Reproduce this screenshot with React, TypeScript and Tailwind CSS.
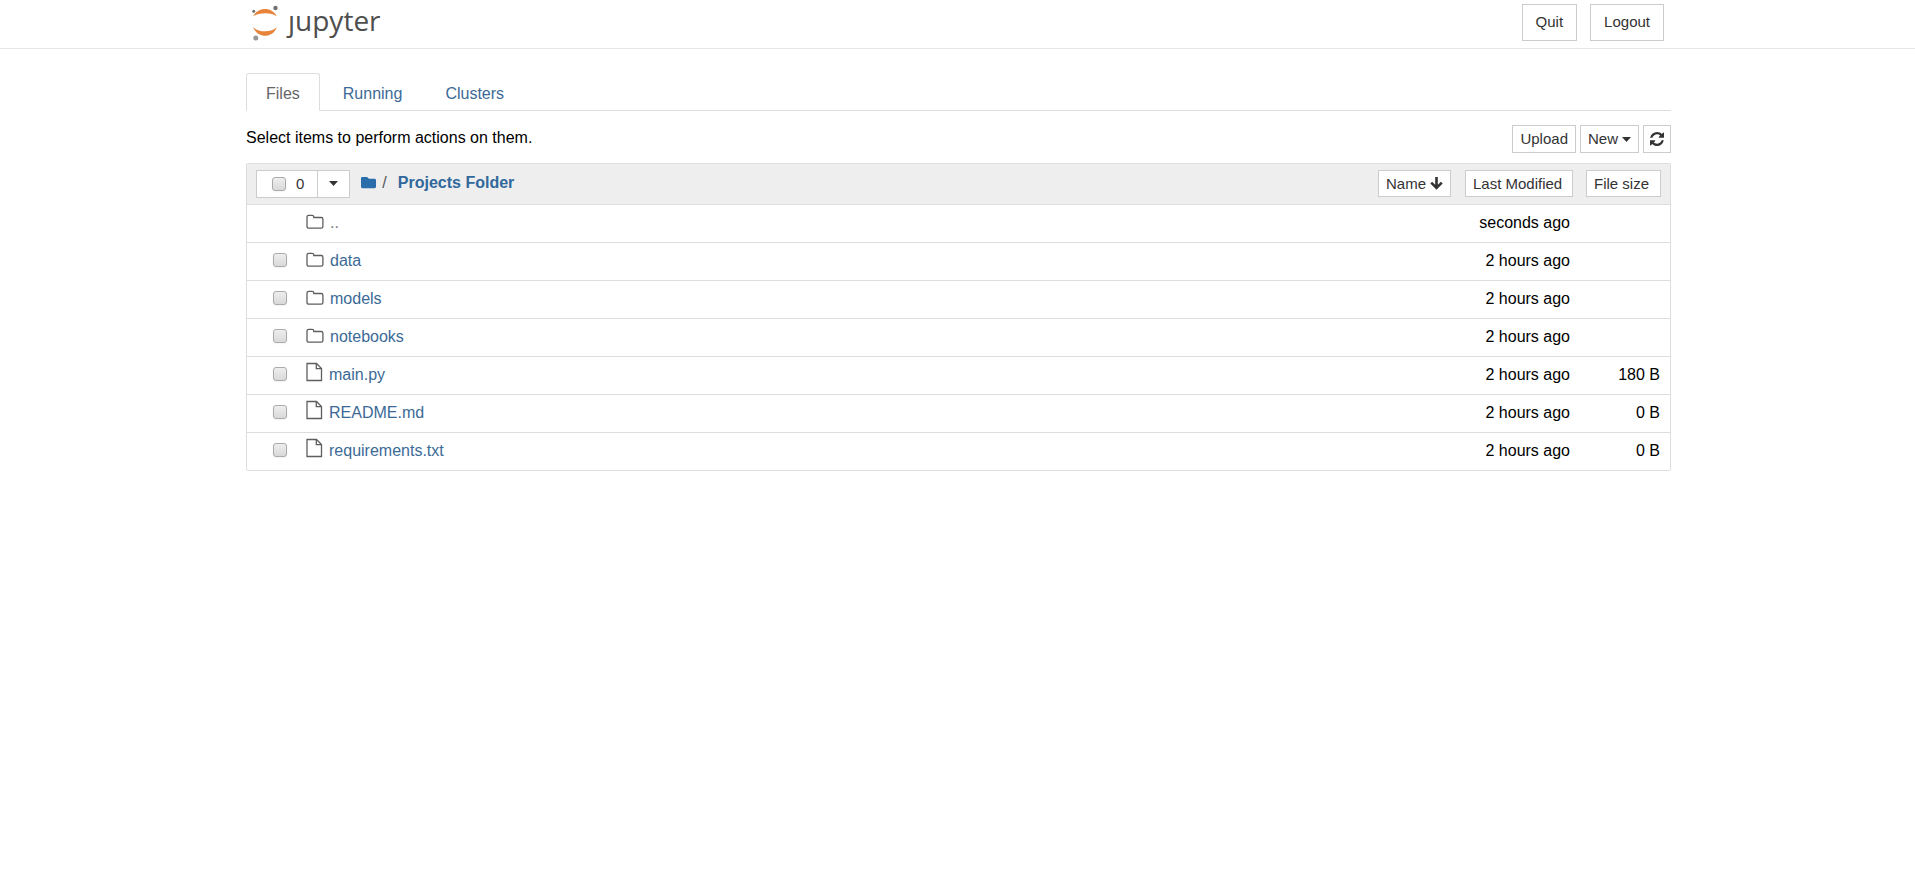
import type { ReactNode } from "react";
import { FaFolder } from "react-icons/fa";
import clsx from "clsx";

interface Entry {
  name: string;
  kind: "parent" | "folder" | "file";
  modified: string;
  size?: string;
}

const entries: Entry[] = [
  { name: "..", kind: "parent", modified: "seconds ago" },
  { name: "data", kind: "folder", modified: "2 hours ago" },
  { name: "models", kind: "folder", modified: "2 hours ago" },
  { name: "notebooks", kind: "folder", modified: "2 hours ago" },
  { name: "main.py", kind: "file", modified: "2 hours ago", size: "180 B" },
  { name: "README.md", kind: "file", modified: "2 hours ago", size: "0 B" },
  { name: "requirements.txt", kind: "file", modified: "2 hours ago", size: "0 B" },
];

const tabs = ["Files", "Running", "Clusters"];

function Logo() {
  return (
    <a href="#" aria-label="jupyter" className="flex items-start">
      <svg width="30" height="44" viewBox="0 0 30 44" aria-hidden="true">
        <path d="M2 16.500C4.500 11.500 9 9 14 9s9.500 2.500 12 7.500C23 14.300 19 13.200 14 13.200S5 14.300 2 16.500z" fill="#e8833a" />
        <path d="M2 27C4.500 33 9 35.800 14 35.800s9.500-2.800 12-8.800c-3 3-7 4.300-12 4.300S5 30 2 27z" fill="#e8833a" />
        <circle cx="24.500" cy="8" r="2.200" fill="#6f7070" />
        <circle cx="2.700" cy="11.300" r="1.500" fill="#707171" />
        <circle cx="4.800" cy="38" r="2.500" fill="#989898" />
      </svg>
      <span className="ml-[7px] font-['Open_Sans',sans-serif] text-[28px] leading-10 text-[#4e4e4e]">
        ȷupyter
      </span>
    </a>
  );
}

function Button({ className, children, label }: { className?: string; children: ReactNode; label?: string }) {
  return (
    <button
      type="button"
      aria-label={label}
      className={clsx("flex items-center border border-[#ccc] bg-white text-[#333]", className)}
    >
      {children}
    </button>
  );
}

function Checkbox({ label, className }: { label: string; className?: string }) {
  return (
    <input
      type="checkbox"
      aria-label={label}
      className={clsx(
        "block size-[14px] shrink-0 appearance-none rounded-[3px] border border-[#aaa] bg-linear-to-b from-[#eee] to-[#d9d9d9] shadow-xs",
        className,
      )}
    />
  );
}

function Caret() {
  return (
    <svg width="9" height="5" viewBox="0 0 9 5" fill="currentColor" aria-hidden="true">
      <path d="M0 0h9L4.500 5z" />
    </svg>
  );
}

function ArrowDownIcon() {
  return (
    <svg width="13" height="13" viewBox="0 0 13 13" fill="none" stroke="currentColor" strokeWidth="2.600" aria-hidden="true">
      <path d="M6.500 0v11M1.200 5.700l5.300 5.300 5.300-5.300" />
    </svg>
  );
}

function FolderIcon() {
  return (
    <svg className="mb-0.5" width="18" height="16" viewBox="0 0 18 16" fill="none" stroke="#5e5e5e" strokeWidth="1.300" aria-hidden="true">
      <path d="M1 3a1.700 1.700 0 0 1 1.700-1.700h3.400A1.700 1.700 0 0 1 7.800 3v.5h7.400a1.700 1.700 0 0 1 1.700 1.700v7.300a1.700 1.700 0 0 1-1.700 1.700H2.700A1.700 1.700 0 0 1 1 12.500z" />
    </svg>
  );
}

function FileIcon() {
  return (
    <svg className="mb-1.5" width="17" height="20" viewBox="0 0 17 20" fill="none" stroke="#5e5e5e" strokeWidth="1.300" aria-hidden="true">
      <path d="M1 1.500h9.500L15.500 6.500V18.500H1z" />
      <path d="M10.300 1.500v5.200h5.200" />
    </svg>
  );
}

function RefreshIcon() {
  return (
    <svg width="14" height="14" viewBox="0 0 1536 1536" fill="currentColor" aria-hidden="true">
      <path d="M1511 928q0 5-1 7-64 268-268 434.500T764 1536q-146 0-282.500-55T238 1324l-129 129q-19 19-45 19t-45-19-19-45V960q0-26 19-45t45-19h448q26 0 45 19t19 45-19 45l-137 137q71 66 161 102t187 36q134 0 250-65t186-179q11-17 53-117 8-23 30-23h192q13 0 22.500 9.500t9.500 22.500zm25-800v448q0 26-19 45t-45 19h-448q-26 0-45-19t-19-45 19-45l138-138Q969 256 768 256q-134 0-250 65T332 500q-11 17-53 117-8 23-30 23H50q-13 0-22.500-9.500T18 608v-7q65-268 270-434.500T768 0q146 0 284 55.500T1297 212l130-129q19-19 45-19t45 19 19 45z" />
    </svg>
  );
}

function Row({ entry }: { entry: Entry }) {
  const { name, kind, modified, size } = entry;
  return (
    <tr className="h-[38px] border-b border-[#ddd]">
      <td className="p-0">
        <div className="flex items-center pl-[26px]">
          {kind === "parent" ? <span className="w-[14px]" /> : <Checkbox label={`Select ${name}`} className="mb-0.5" />}
          <a
            href="#"
            className={clsx(
              "ml-[19px] flex items-center gap-[6px] leading-5",
              kind === "parent" ? "text-[#777]" : "text-[#3b6a96]",
            )}
          >
            {kind === "file" ? <FileIcon /> : <FolderIcon />}
            {name}
          </a>
        </div>
      </td>
      <td className="p-0 pr-[3px] text-right leading-5">{modified}</td>
      <td className="p-0 pr-[10px] text-right leading-5">{size}</td>
    </tr>
  );
}

export default function App() {
  return (
    <div className="bg-white font-['Liberation_Sans',Arial,sans-serif] text-base text-black">
      <header className="border-b border-[#e7e7e7]">
        <div className="mx-auto flex h-12 max-w-[1427px] items-start justify-between pr-[7px] pl-[7px]">
          <Logo />
          <div className="flex gap-[13px] pt-1 text-[15px]">
            <Button className="h-[37px] px-[13px]">Quit</Button>
            <Button className="h-[37px] px-[13px]">Logout</Button>
          </div>
        </div>
      </header>

      <main className="mx-auto max-w-[1427px] pt-6 pl-0.5">
        <nav className="flex gap-[3px] border-b border-[#ddd]">
          {tabs.map((tab, i) => (
            <a
              key={tab}
              href="#"
              className={clsx(
                "-mb-px rounded-t-[3px] border px-[19px] pt-[10px] pb-[6px] leading-5",
                i === 0 ? "border-[#ddd] border-b-white bg-white text-[#666]" : "border-transparent text-[#3b6a96]",
              )}
            >
              {tab}
            </a>
          ))}
        </nav>

        <div className="flex items-center justify-between pt-[14px] pb-[10px]">
          <p className="pb-0.5 leading-6">Select items to perform actions on them.</p>
          <div className="flex gap-1 text-[15px]">
            <Button className="h-7 px-[7px]">Upload</Button>
            <Button className="h-7 gap-1 px-[7px]">
              New
              <Caret />
            </Button>
            <Button className="h-7 px-[6px]" label="Refresh">
              <RefreshIcon />
            </Button>
          </div>
        </div>

        <div className="overflow-hidden rounded-[2px] border border-b-0 border-[#ddd]">
          <table className="w-full table-fixed border-collapse">
            <colgroup>
              <col />
              <col className="w-[122px]" />
              <col className="w-[97px]" />
            </colgroup>
            <thead>
              <tr className="h-10 border-b border-[#ddd] bg-[#eee] text-[15px]">
                <th className="p-0 font-normal">
                  <div className="flex items-center justify-between pl-[9px]">
                    <div className="flex items-center">
                      <div className="flex h-7 items-center gap-[10px] border border-[#ccc] bg-white pr-[13px] pl-[15px] text-[#333]">
                        <Checkbox label="Select all" />
                        <span>0</span>
                      </div>
                      <Button className="-ml-px h-7 px-[11px]" label="Selection menu">
                        <Caret />
                      </Button>
                      <div className="ml-[11px] flex items-center pb-0.5 text-base">
                        <a href="#" aria-label="Home" className="text-[#296eaa]">
                          <FaFolder className="size-[15px]" />
                        </a>
                        <span className="ml-[6px] text-[#555]">/</span>
                        <a href="#" className="ml-[11px] font-bold text-[#30689c]">
                          Projects Folder
                        </a>
                      </div>
                    </div>
                    <Button className="h-[27px] gap-1 px-[7px]">
                      Name
                      <ArrowDownIcon />
                    </Button>
                  </div>
                </th>
                <th className="p-0 font-normal">
                  <Button className="ml-[14px] h-[27px] w-[108px] px-[7px]">Last Modified</Button>
                </th>
                <th className="p-0 font-normal">
                  <Button className="ml-[13px] h-[27px] w-[75px] px-[7px]">File size</Button>
                </th>
              </tr>
            </thead>
            <tbody>
              {entries.map((entry) => (
                <Row key={entry.name} entry={entry} />
              ))}
            </tbody>
          </table>
        </div>
      </main>
    </div>
  );
}
